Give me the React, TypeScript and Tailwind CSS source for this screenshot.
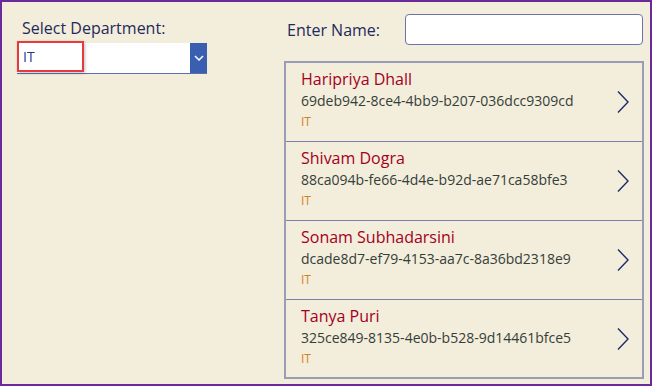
import React from 'react';

interface Employee {
  name: string;
  id: string;
  dept: string;
}

const employees: Employee[] = [
  { name: 'Haripriya Dhall', id: '69deb942-8ce4-4bb9-b207-036dcc9309cd', dept: 'IT' },
  { name: 'Shivam Dogra', id: '88ca094b-fe66-4d4e-b92d-ae71ca58bfe3', dept: 'IT' },
  { name: 'Sonam Subhadarsini', id: 'dcade8d7-ef79-4153-aa7c-8a36bd2318e9', dept: 'IT' },
  { name: 'Tanya Puri', id: '325ce849-8135-4e0b-b528-9d14461bfce5', dept: 'IT' },
];

const Chevron: React.FC = () => (
  <svg width="14" height="24" viewBox="0 0 14 24" fill="none">
    <path d="M2 1.5 L12 12 L2 22.5" stroke="#1f2a6b" strokeWidth="1.4" />
  </svg>
);

const App: React.FC = () => {
  return (
    <div className="w-[655px] h-[387px] bg-white" style={{ fontFamily: '"Open Sans", sans-serif' }}>
      <div className="w-[652px] h-[386px] border-2 border-[#6b2a9a] bg-[#f3eddb] flex">
        {/* left column */}
        <div className="w-[282px] pl-[15px] pt-[15px] flex flex-col">
          <div className="text-[16px] leading-[22px] text-[#1f2a5c] pl-[5px]">Select Department:</div>
          <div className="mt-[4px] w-[190px] h-[31px] flex border-b border-[#5a6fb0] relative">
            <div className="flex-1 bg-white" />
            <div className="w-[17px] bg-[#3b5fb0] flex items-center justify-center">
              <svg width="10" height="6" viewBox="0 0 10 6" fill="none">
                <path d="M1 1 L5 5 L9 1" stroke="white" strokeWidth="1.5" />
              </svg>
            </div>
            <div className="absolute left-0 top-[-2px] w-[67px] h-[31px] border-2 border-[#e8393f] bg-white shadow-[1px_1px_3px_rgba(0,0,0,0.25)] flex items-center pl-[4px] text-[14px] text-[#1f3a8a]">
              IT
            </div>
          </div>
        </div>

        {/* right column */}
        <div className="flex flex-col pt-[12px]">
          <div className="flex items-center h-[31px]">
            <div className="w-[121px] pl-[3px] text-[16px] text-[#1f2a5c]">Enter Name:</div>
            <div className="w-[238px] h-[31px] bg-white border border-[#6b73a8] rounded-[4px]" />
          </div>
          <div className="mt-[16px] w-[360px] h-[318px] border-2 border-[#9a9db8] overflow-hidden">
            {employees.map((e) => (
              <div key={e.id} className="h-[79px] border-b border-[#7b80a8] flex items-center pl-[15px] pr-[12px]">
                <div className="flex-1 flex flex-col mt-[-6px]">
                  <div className="text-[16px] leading-[22px] text-[#a3001e]">{e.name}</div>
                  <div className="text-[14px] leading-[20px] text-[#33403a] mt-[1px]">{e.id}</div>
                  <div className="text-[12px] leading-[18px] text-[#d4802b] mt-[2px]">{e.dept}</div>
                </div>
                <Chevron />
              </div>
            ))}
            <div className="border-t border-[#9a9db8]" />
          </div>
        </div>
      </div>
    </div>
  );
};

export default App;
